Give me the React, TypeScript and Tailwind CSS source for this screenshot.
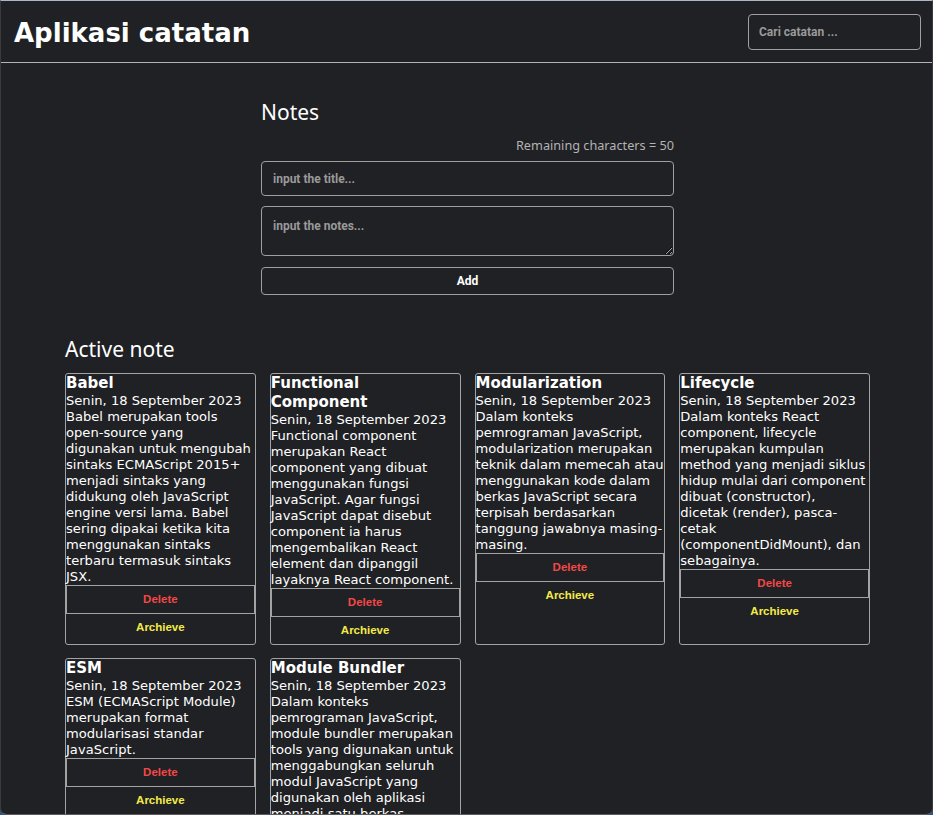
import React from 'react';

type Note = {
  id: number;
  title: string;
  createdAt: string;
  body: string;
};

const notes: Note[] = [
  {
    id: 1,
    title: 'Babel',
    createdAt: 'Senin, 18 September 2023',
    body: 'Babel merupakan tools open-source yang digunakan untuk mengubah sintaks ECMAScript 2015+ menjadi sintaks yang didukung oleh JavaScript engine versi lama. Babel sering dipakai ketika kita menggunakan sintaks terbaru termasuk sintaks JSX.',
  },
  {
    id: 2,
    title: 'Functional Component',
    createdAt: 'Senin, 18 September 2023',
    body: 'Functional component merupakan React component yang dibuat menggunakan fungsi JavaScript. Agar fungsi JavaScript dapat disebut component ia harus mengembalikan React element dan dipanggil layaknya React component.',
  },
  {
    id: 3,
    title: 'Modularization',
    createdAt: 'Senin, 18 September 2023',
    body: 'Dalam konteks pemrograman JavaScript, modularization merupakan teknik dalam memecah atau menggunakan kode dalam berkas JavaScript secara terpisah berdasarkan tanggung jawabnya masing-masing.',
  },
  {
    id: 4,
    title: 'Lifecycle',
    createdAt: 'Senin, 18 September 2023',
    // nbsp keeps "dicetak (render)," together so it wraps like the browser did
    body: 'Dalam konteks React component, lifecycle merupakan kumpulan method yang menjadi siklus hidup mulai dari component dibuat (constructor), dicetak\u00a0(render), pasca-cetak (componentDidMount), dan sebagainya.',
  },
  {
    id: 5,
    title: 'ESM',
    createdAt: 'Senin, 18 September 2023',
    body: 'ESM (ECMAScript Module) merupakan format modularisasi standar JavaScript.',
  },
  {
    id: 6,
    title: 'Module Bundler',
    createdAt: 'Senin, 18 September 2023',
    body: 'Dalam konteks pemrograman JavaScript, module bundler merupakan tools yang digunakan untuk menggabungkan seluruh modul JavaScript yang digunakan oleh aplikasi menjadi satu berkas.',
  },
];

const NoteItem = ({ note }: { note: Note }) => {
  return (
    <div className="flex flex-col rounded-[3px] border border-[#a3a3a3] font-['DejaVu_Sans',sans-serif] text-white">
      <h3 className="text-[15px] font-bold leading-[19px]">{note.title}</h3>
      <p className="text-[13.1px] leading-4">{note.createdAt}</p>
      <p className="text-[13.1px] leading-4">{note.body}</p>
      <button className="h-[29px] border border-[#a3a3a3] font-['Liberation_Sans',sans-serif] text-[11.5px] font-bold text-[#f44848]">
        Delete
      </button>
      <button className="h-[27px] font-['Liberation_Sans',sans-serif] text-[11.5px] font-bold text-[#f4ea48]">
        Archieve
      </button>
    </div>
  );
};

export default function App() {
  return (
    <div className="h-[815px] overflow-hidden bg-[#34547e]">
      <div className="h-full overflow-hidden rounded-b-[7px] border-x border-t border-b border-x-[#3a3a3c] border-t-[#aeb6c6] border-b-[#5c5c5e] bg-[#202124]">
        {/* Header */}
        <header className="flex h-[62px] items-center justify-between border-b border-[#b4b4b4] pl-[13px] pr-[11px]">
          <h1 className="mt-1 font-['DejaVu_Sans',sans-serif] text-[26px] font-bold text-white">Aplikasi catatan</h1>
          <input
            type="text"
            placeholder="Cari catatan ..."
            className="h-[36px] w-[173px] rounded-[4px] border border-[#a0a0a0] bg-transparent px-[10px] font-['Roboto',sans-serif] text-[12px] font-bold text-white outline-none placeholder:text-[#9a9a9a]"
          />
        </header>

        <main className="pl-[2px]">
          {/* Form */}
          <section className="mx-auto w-[413px] pt-[35px]">
            <h2 className="font-['Noto_Sans',sans-serif] text-[21px] leading-[28px] text-white">Notes</h2>
            <p className="mt-[9px] text-right font-['Noto_Sans',sans-serif] text-[12.7px] leading-5 text-[#b3b3b3]">
              Remaining characters = 50
            </p>
            <form className="mt-[6px] flex flex-col">
              <input
                type="text"
                placeholder="input the title..."
                className="h-[35px] rounded-[4px] border border-[#a0a0a0] bg-transparent px-[11px] font-['Roboto',sans-serif] text-[12px] font-bold text-white outline-none placeholder:text-[#9a9a9a]"
              />
              <textarea
                placeholder="input the notes..."
                className="mt-[10px] h-[50px] rounded-[4px] border border-[#a0a0a0] bg-transparent px-[11px] py-[10px] font-['Roboto',sans-serif] text-[12px] font-bold text-white outline-none placeholder:text-[#9a9a9a]"
              />
              <button
                type="button"
                className="mt-[11px] h-[28px] rounded-[4px] border border-[#a0a0a0] font-['Roboto',sans-serif] text-[12px] font-bold text-white"
              >
                Add
              </button>
            </form>
          </section>

          {/* Notes list */}
          <section className="mx-auto mt-[40px] w-[805px]">
            <h2 className="font-['Noto_Sans',sans-serif] text-[21px] leading-[28px] text-white">Active note</h2>
            <div className="mt-[10px] grid grid-cols-4 gap-x-[14px] gap-y-[13px]">
              {notes.map((note) => (
                <NoteItem key={note.id} note={note} />
              ))}
            </div>
          </section>
        </main>
      </div>
    </div>
  );
}
